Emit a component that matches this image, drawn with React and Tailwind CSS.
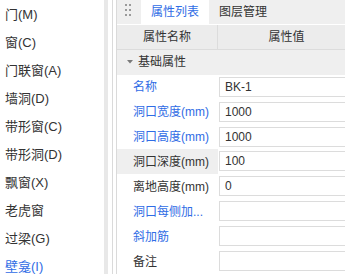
import React from "react";

const leftItems = [
  { t: "门(M)" },
  { t: "窗(C)" },
  { t: "门联窗(A)" },
  { t: "墙洞(D)" },
  { t: "带形窗(C)" },
  { t: "带形洞(D)" },
  { t: "飘窗(X)" },
  { t: "老虎窗" },
  { t: "过梁(G)" },
  { t: "壁龛(I)", blue: true },
];

const rows = [
  { n: "名称", v: "BK-1", blue: true },
  { n: "洞口宽度(mm)", v: "1000", blue: true },
  { n: "洞口高度(mm)", v: "1000", blue: true },
  { n: "洞口深度(mm)", v: "100", hl: true },
  { n: "离地高度(mm)", v: "0" },
  { n: "洞口每侧加...", v: "", blue: true },
  { n: "斜加筋", v: "", blue: true },
  { n: "备注", v: "" },
];

export default function App() {
  return (
    <div
      className="w-[345px] h-[274px] overflow-hidden flex bg-white text-[#333333]"
      style={{ fontFamily: '"Liberation Sans", "Noto Sans CJK SC", sans-serif' }}
    >
      {/* left list */}
      <div className="w-[104px] shrink-0 pt-[1px]">
        {leftItems.map((it) => (
          <div
            key={it.t}
            className={`h-[28px] leading-[28px] pl-[5px] text-[13px] whitespace-nowrap ${
              it.blue ? "text-[#2f6ce5]" : "text-[#333333]"
            }`}
          >
            {it.t}
          </div>
        ))}
      </div>
      <div className="w-[4px] shrink-0 bg-[#e8e8e8]" />
      <div className="w-[4px] shrink-0 bg-white" />
      <div className="w-[1px] shrink-0 bg-[#dadada]" />
      <div className="w-[3px] shrink-0 bg-white" />
      <div className="w-[1px] shrink-0 bg-[#dadada]" />

      {/* right panel */}
      <div className="w-[238px] shrink-0 flex flex-col text-[12px]">
        {/* tab bar */}
        <div className="h-[24px] flex bg-[#efefef] border-b border-white box-content">
          <div className="w-[24px] flex items-center justify-center">
            <div className="grid grid-cols-2 gap-x-[2px] gap-y-[3px] mt-[-3px] ml-[-2px]">
              {[0, 1, 2, 3, 4, 5].map((i) => (
                <div key={i} className="w-[2px] h-[2px] bg-[#9a9a9a]" />
              ))}
            </div>
          </div>
          <div className="w-[68px] bg-white flex items-center justify-center text-[#2f6ce5]">
            属性列表
          </div>
          <div className="px-[10px] flex items-center text-[#333333]">图层管理</div>
        </div>

        {/* header */}
        <div className="h-[24px] flex bg-[#ececec] border-b border-[#dcdcdc] box-content">
          <div className="w-[101px] border-r border-[#dcdcdc] flex items-center justify-center">
            属性名称
          </div>
          <div className="flex-1 flex items-center justify-center">属性值</div>
        </div>

        {/* section */}
        <div className="h-[25px] flex items-center bg-[#efefef]">
          <svg width="6" height="4" viewBox="0 0 6 4" className="ml-[10px] mr-[5px]">
            <path d="M0 0 L6 0 L3 3.5 Z" fill="#7a7a7a" />
          </svg>
          <span>基础属性</span>
        </div>

        {/* rows */}
        {rows.map((r) => (
          <div key={r.n} className="h-[25px] flex">
            <div
              className={`w-[101px] pl-[16px] flex items-center whitespace-nowrap ${
                r.hl ? "bg-[#efefef]" : "bg-white"
              } ${r.blue ? "text-[#2f6ce5]" : "text-[#333333]"}`}
            >
              {r.n}
            </div>
            <div className="flex-1 pl-[1px] pt-[2px]">
              <div className="h-[20px] border border-[#dcdcdc] bg-white flex items-center pl-[5px] text-[#333333]">
                {r.v}
              </div>
            </div>
          </div>
        ))}
      </div>
    </div>
  );
}
